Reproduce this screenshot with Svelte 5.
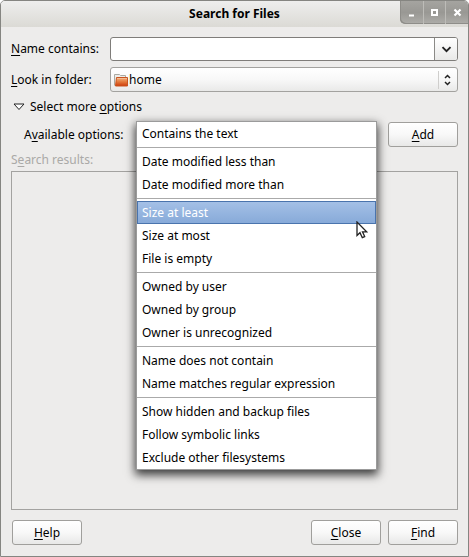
<script>
  const groups = [
    ['Contains the text'],
    ['Date modified less than', 'Date modified more than'],
    ['Size at least', 'Size at most', 'File is empty'],
    ['Owned by user', 'Owned by group', 'Owner is unrecognized'],
    ['Name does not contain', 'Name matches regular expression'],
    ['Show hidden and backup files', 'Follow symbolic links', 'Exclude other filesystems'],
  ];
  let selected = $state('Size at least');
  let name = $state('');
</script>

<main class="window">
  <header class="titlebar">
    <h1>Search for Files</h1>
    <div class="controls">
      <button aria-label="Minimize"><svg width="9" height="9" viewBox="0 0 9 9"><path d="M2 7.500h5" stroke="#fff" stroke-width="2" /></svg></button>
      <button aria-label="Maximize"><svg width="9" height="9" viewBox="0 0 9 9"><path d="M2 2h5v5h-5z" fill="none" stroke="#fff" stroke-width="2" /></svg></button>
      <button aria-label="Close window"><svg width="9" height="9" viewBox="0 0 9 9"><path d="M1.500 1.500l6 6M7.500 1.500l-6 6" stroke="#fff" stroke-width="2.200" /></svg></button>
    </div>
  </header>

  <div class="content">
    <div class="row name-row">
      <label for="name"><u>N</u>ame contains:</label>
      <div class="combo">
        <input id="name" type="text" bind:value={name} />
        <button class="drop" aria-label="Show history">
          <svg width="11" height="7" viewBox="0 0 11 7"><path d="M1.500 1.200l4 4 4-4" fill="none" stroke="#222" stroke-width="1.900" /></svg>
        </button>
      </div>
    </div>

    <div class="row folder-row">
      <label for="folder"><u>L</u>ook in folder:</label>
      <div class="picker">
        <select id="folder"><option>home</option></select>
        <svg class="folder" width="14" height="14" viewBox="0 0 14 14">
          <defs>
            <linearGradient id="orange" x2="0" y2="1">
              <stop offset="0" stop-color="#f3b585" />
              <stop offset="0.500" stop-color="#e47a3c" />
              <stop offset="1" stop-color="#cf3c0c" />
            </linearGradient>
          </defs>
          <path d="M.5 12.500V1.500h5l1 1h5v3" fill="#ededea" stroke="#aaa9a2" />
          <path d="M2.500 4.500h11v8.500h-12z" fill="url(#orange)" stroke="#c9541f" />
          <path d="M3 5.500h10" stroke="#f8c9a4" opacity=".6" />
        </svg>
        <svg class="updown" width="7" height="12" viewBox="0 0 7 12"><path d="M1 4l2.500-2.500L6 4M1 8l2.500 2.500L6 8" fill="none" stroke="#222" stroke-width="1.500" /></svg>
      </div>
    </div>

    <button class="expander" aria-expanded="true">
      <svg width="12" height="8" viewBox="0 0 12 8"><path d="M1 1h10l-5 5.500z" fill="#fff" stroke="#222" /></svg>
      <span>Select more <u>o</u>ptions</span>
    </button>

    <div class="row options-row">
      <span class="options-label" id="available">A<u>v</u>ailable options:</span>
      <div class="anchor">
        <div class="menu" role="listbox" aria-labelledby="available">
          {#each groups as group, i}
            {#if i > 0}<hr />{/if}
            {#each group as item}
              <button
                class="item"
                class:active={item === selected}
                role="option"
                aria-selected={item === selected}
                onclick={() => (selected = item)}>{item}</button>
            {/each}
          {/each}
          <svg class="cursor" width="12" height="19" viewBox="0 0 12 19"><path d="M1 1v13.500l3-2.800 2.300 5 2.400-1.100-2.200-4.800h4.200z" fill="#fff" stroke="#222" stroke-width="1.300" /></svg>
        </div>
      </div>
      <button class="push"><span><u>A</u>dd</span></button>
    </div>

    <span class="results-label" id="results">S<u>e</u>arch results:</span>
    <div class="results" role="region" aria-labelledby="results"></div>

    <footer class="row">
      <button class="push help"><span><u>H</u>elp</span></button>
      <button class="push"><span><u>C</u>lose</span></button>
      <button class="push"><span><u>F</u>ind</span></button>
    </footer>
  </div>
</main>

<style>
  :global(body) {
    margin: 0;
    background: #fff;
  }
  .window,
  .window * {
    box-sizing: border-box;
  }
  .window {
    display: flex;
    flex-direction: column;
    min-height: 100vh;
    border: 1px solid #858581;
    border-radius: 5px 5px 0 0;
    background: #edeceb;
    color: #000;
    font: 12px/20px "Noto Sans", sans-serif;
  }
  button,
  input,
  select {
    margin: 0;
    padding: 0;
    border: 0;
    background: none;
    color: inherit;
    font: inherit;
  }
  u {
    text-underline-offset: 2px;
  }
  svg {
    display: block;
  }
  .titlebar {
    display: grid;
    grid-template-columns: 68px 1fr 68px;
    height: 26px;
    border-radius: 4px 4px 0 0;
    background: linear-gradient(#eeeeed, #dbdad5);
  }
  h1 {
    grid-column: 2;
    margin: 0;
    text-align: center;
    font-size: 12px;
    line-height: 26px;
    font-weight: 700;
  }
  .controls {
    display: grid;
    grid-template-columns: repeat(3, 1fr);
    height: 23px;
    border-radius: 0 4px 0 5px;
    background: linear-gradient(#a5a4a0, #999894 50%, #aeada9);
    box-shadow: inset 1px -1px #8e8d89;
  }
  .controls button {
    display: flex;
    align-items: center;
    justify-content: center;
  }
  .controls button + button {
    border-left: 1px solid #bdbcb8;
  }
  .content {
    display: flex;
    flex: 1;
    flex-direction: column;
    padding: 10px 10px 11px;
  }
  .row {
    display: flex;
    align-items: center;
  }
  .name-row label,
  .folder-row label {
    width: 99px;
  }
  .combo {
    display: flex;
    flex: 1;
    height: 24px;
    border: 1px solid #7f7d7a;
    border-radius: 3px;
    background: #fff;
  }
  .combo input {
    flex: 1;
    min-width: 0;
    padding: 0 6px;
    border-radius: 3px;
    outline: 0;
  }
  .drop {
    display: flex;
    align-items: center;
    justify-content: center;
    width: 23px;
    border-left: 1px solid #8b8a87;
    border-radius: 0 2px 2px 0;
    background: linear-gradient(#fff, #e9e9e8);
  }
  .folder-row {
    margin-top: 6px;
  }
  .picker {
    display: grid;
    flex: 1;
    align-items: center;
    height: 25px;
    border: 1px solid #a3a29f;
    border-radius: 3px;
    background: linear-gradient(#fff, #f8f8f8 50%, #e9e9e8);
  }
  .picker > * {
    grid-area: 1 / 1;
  }
  .picker select {
    width: 100%;
    height: 23px;
    padding-left: 18px;
    appearance: none;
    outline: 0;
  }
  .picker svg {
    pointer-events: none;
  }
  .folder {
    margin-left: 3px;
  }
  .picker .updown {
    justify-self: end;
    box-sizing: content-box;
    padding: 3px 6px 3px 5px;
    border-left: 1px solid #cfcecc;
  }
  .expander {
    display: flex;
    align-items: center;
    gap: 5px;
    height: 20px;
    margin: 5px 0 5px 2px;
    text-align: left;
  }
  .options-label {
    margin-left: 13px;
    width: 112px;
    white-space: nowrap;
  }
  .anchor {
    position: relative;
    flex: 1;
    height: 25px;
    margin-right: 11px;
  }
  .menu {
    position: absolute;
    top: -1px;
    left: 0;
    right: 0;
    border: 1px solid #9b9b9b;
    background: #fff;
    box-shadow: 0 4px 9px 1px rgba(0, 0, 0, 0.75);
  }
  .item {
    display: block;
    width: 100%;
    height: 23px;
    padding-left: 5px;
    text-align: left;
    white-space: nowrap;
  }
  .item.active {
    background: linear-gradient(#a5c1e7, #86a9d8);
    box-shadow: inset 0 0 0 1px #4a74ad;
    color: #fff;
  }
  hr {
    height: 1px;
    margin: 2px 0;
    border: 0;
    background: #aaa;
  }
  .cursor {
    position: absolute;
    top: 99px;
    right: 8px;
  }
  .push {
    width: 70px;
    height: 25px;
    border: 1px solid #a09f9c;
    border-radius: 3px;
    background: linear-gradient(#fff, #f8f8f8 50%, #e8e8e7);
  }
  .results-label {
    margin: 3px 0 1px;
    color: #aaa9a7;
  }
  .results {
    flex: 1;
    border: 1px solid #a3a2a0;
  }
  footer {
    gap: 7px;
    margin-top: 10px;
  }
  .help {
    margin-right: auto;
    margin-left: 1px;
  }
</style>
